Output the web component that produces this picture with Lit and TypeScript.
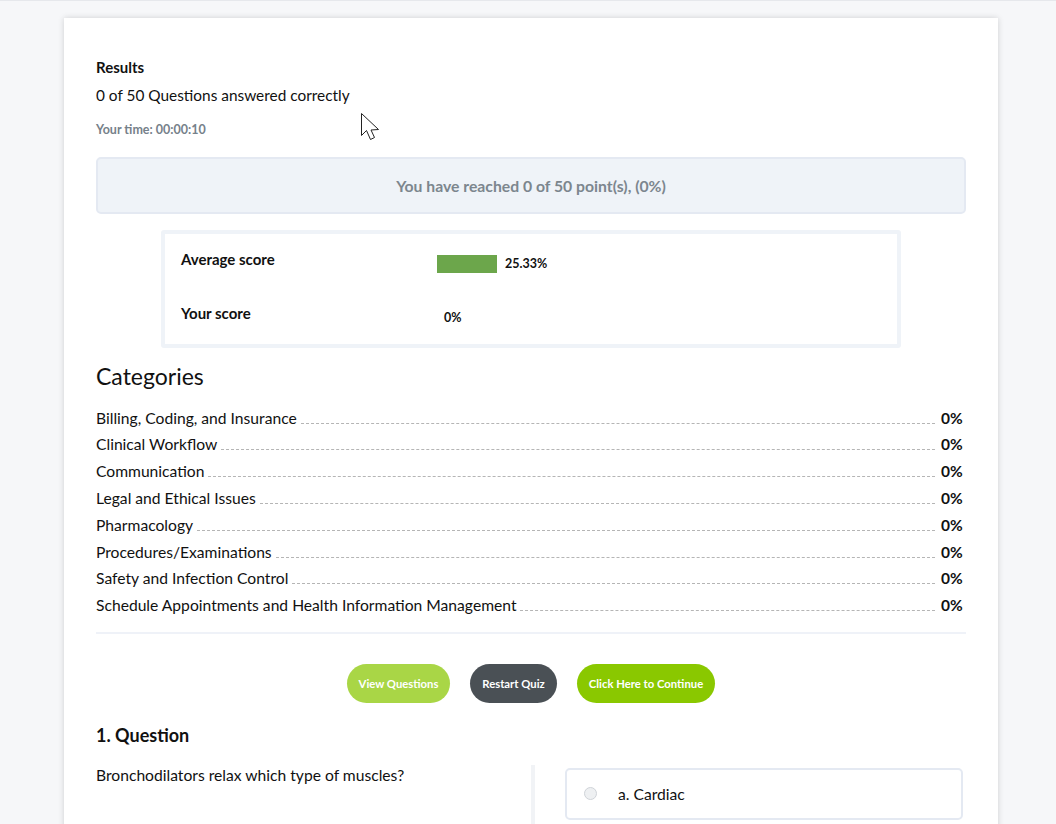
import { LitElement, html, css } from "lit";
import { customElement } from "lit/decorators.js";

const cats = [
  "Billing, Coding, and Insurance",
  "Clinical Workflow",
  "Communication",
  "Legal and Ethical Issues",
  "Pharmacology",
  "Procedures/Examinations",
  "Safety and Infection Control",
  "Schedule Appointments and Health Information Management",
];

@customElement("app-root")
export class AppRoot extends LitElement {
  static styles = css`
    :host { display: block; height: 824px; overflow: hidden; background: #f6f7f9; border-top: 1px solid #e6e8ec; box-sizing: border-box; position: relative;
      font-family: "Lato", "Liberation Sans", sans-serif; color: #111; font-size: 15.65px; }
    .card { margin: 17px 58px 0 64px; background: #fff; box-shadow: 0 0 6px rgba(0,0,0,.16); padding: 39px 32px 0; height: 900px; box-sizing: border-box; }
    .results { font-weight: 700; font-size: 15px; line-height: 20px; }
    .answered { margin-top: 8px; line-height: 20px; font-size: 15.4px; }
    .time { margin-top: 17px; font-size: 12.5px; font-weight: 700; color: #76818a; line-height: 16px; }
    .reached { margin-top: 19px; height: 57px; box-sizing: border-box; background: #eff3f8; border: 2px solid #e4e9f2; border-radius: 5px; padding-bottom: 1px; display: flex; align-items: center; justify-content: center; font-weight: 700; color: #7c868e; font-size: 15.75px; }
    .scores { margin: 16px auto 0; width: 740px; height: 118px; box-sizing: border-box; border: 4px solid #eff3f8; border-radius: 3px; padding: 15px 16px 0; display: grid; grid-template-columns: 256px 1fr; grid-auto-rows: 54px; font-weight: 700; font-size: 15px; }
    .bar-cell { display: flex; align-items: center; gap: 8px; font-size: 12.5px; height: 18px; margin-top: 5px; }
    .bar { width: 60px; height: 18px; background: #6ca64b; margin-top: 1px; }
    .zero { padding-left: 7px; }
    .label { line-height: 20px; }
    h2 { font-weight: 400; font-size: 23px; line-height: 28px; margin: 14px 0 13.9px; color: #111; }
    .row { display: flex; align-items: flex-end; height: 26.8px; line-height: 26px; }
    .dots { flex: 1; border-bottom: 1px dashed #b5b5b5; margin: 0 5px 7px 4px; }
    .val { font-weight: 700; width: 26px; text-align: left; font-size: 15.5px; padding-left: 1px; box-sizing: border-box; line-height: 25px; }
    hr { border: 0; height: 2px; background: #eff2f8; margin: 13.6px 0 0; }
    .btns { display: flex; justify-content: center; gap: 20px; margin-top: 30px; }
    .btn { height: 39px; border-radius: 20px; display: flex; align-items: center; justify-content: center; color: #fff; font-size: 11.3px; font-weight: 700; }
    .b1 { width: 103px; background: #a9d646; }
    .b2 { width: 87px; background: #4a5055; }
    .b3 { width: 138px; background: #8ac800; }
    h3 { font-size: 18px; font-weight: 700; margin: 20px 0 0; line-height: 24px; color: #111; }
    .q { display: grid; grid-template-columns: 435px 1fr; margin-top: 18px; }
    .qt { line-height: 20px; }
    .opts { border-left: 4px solid #f1f3f6; padding-left: 30px; padding-top: 3px; min-height: 120px; }
    .opt { width: 398px; height: 52px; box-sizing: border-box; border: 2px solid #e4e9f2; border-radius: 5px; display: flex; align-items: center; padding-left: 17px; gap: 21px; }
    .radio { width: 13px; height: 13px; border-radius: 50%; background: #eef0f2; border: 1px solid #cfd3d8; box-sizing: border-box; }
    .cursor { position: absolute; left: 361px; top: 112px; }
  `;
  render() {
    return html`
      <div class="card">
        <div class="results">Results</div>
        <div class="answered">0 of 50 Questions answered correctly</div>
        <div class="time">Your time: 00:00:10</div>
        <div class="reached">You have reached 0 of 50 point(s), (0%)</div>
        <div class="scores">
          <div class="label">Average score</div>
          <div class="bar-cell"><div class="bar"></div><span>25.33%</span></div>
          <div class="label">Your score</div>
          <div class="bar-cell"><span class="zero">0%</span></div>
        </div>
        <h2>Categories</h2>
        ${cats.map((c) => html`<div class="row"><span>${c}</span><span class="dots"></span><span class="val">0%</span></div>`)}
        <hr />
        <div class="btns">
          <div class="btn b1">View Questions</div>
          <div class="btn b2">Restart Quiz</div>
          <div class="btn b3">Click Here to Continue</div>
        </div>
        <h3>1. Question</h3>
        <div class="q">
          <div class="qt">Bronchodilators relax which type of muscles?</div>
          <div class="opts"><div class="opt"><span class="radio"></span><span>a. Cardiac</span></div></div>
        </div>
      </div>
      <svg class="cursor" width="19" height="28" viewBox="0 0 19 28"><path d="M0.5 0.5 L0.5 22.5 L5.5 17.5 L9.5 26.5 L13.5 24.5 L10 17 L17.5 16.5 Z" fill="#fff" stroke="#222" stroke-width="1"/></svg>
    `;
  }
}
